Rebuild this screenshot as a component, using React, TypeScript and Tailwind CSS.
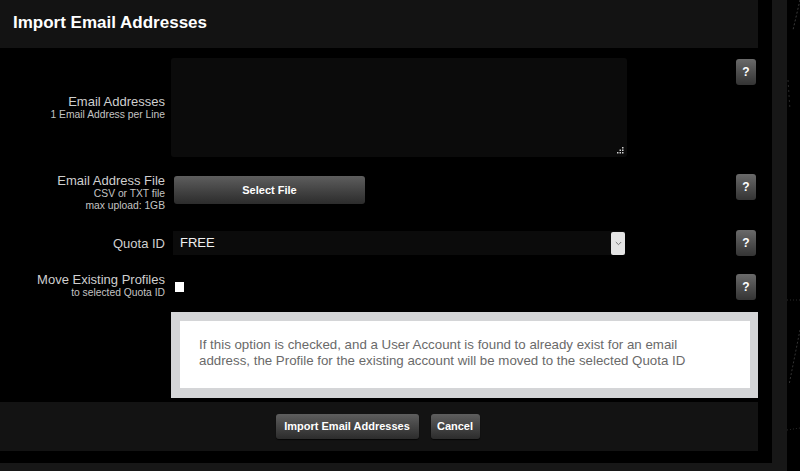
import React from "react";

const font = { fontFamily: '"Liberation Sans", Arial, sans-serif' };

function Help({ className = "" }: { className?: string }) {
  return (
    <div
      className={`w-[20px] h-[26px] rounded-[3px] bg-gradient-to-b from-[#6a6a6a] to-[#343434] flex items-center justify-center text-white font-bold text-[12px] leading-none shadow-[0_1px_1px_rgba(0,0,0,0.6)] ${className}`}
    >
      ?
    </div>
  );
}

function Btn({ children, className = "" }: { children: React.ReactNode; className?: string }) {
  return (
    <div
      className={`h-[25px] rounded-[3px] bg-gradient-to-b from-[#5e5e5e] to-[#2c2c2c] flex items-center justify-center text-white font-bold text-[11px] px-[7px] shadow-[0_1px_1px_rgba(0,0,0,0.7)] ${className}`}
    >
      {children}
    </div>
  );
}

export default function App() {
  return (
    <div className="w-[800px] h-[471px] bg-black flex overflow-hidden" style={font}>
      <div className="w-[787px] h-[471px] bg-[#171717] pr-[15px] pb-[8px] shrink-0">
        <div className="w-[772px] h-[463px] bg-black pr-[14px] pb-[12px]">
          <div className="w-[758px] h-[451px] bg-black flex flex-col">
            {/* header */}
            <div className="h-[48px] bg-[#131313] flex items-center pl-[13px] pb-[2px]">
              <span className="text-white font-bold text-[17px]">Import Email Addresses</span>
            </div>
            {/* body */}
            <div className="flex-1 flex flex-col">
              {/* row 1 */}
              <div className="mt-[10px] h-[99px] flex items-center">
                <div className="w-[165px] text-right">
                  <div className="text-[13px] leading-[15px] text-[#cfcfcf]">Email Addresses</div>
                  <div className="text-[10.3px] leading-[12px] text-[#c4c4c4]">1 Email Address per Line</div>
                </div>
                <div className="ml-[6px] w-[456px] h-[99px] bg-[#0b0b0b] rounded-[3px] relative">
                  <svg className="absolute right-[3px] bottom-[3px]" width="7" height="7" viewBox="0 0 7 7">
                    <rect x="5" y="0" width="1.5" height="1.5" fill="#cfcfcf" />
                    <rect x="2.5" y="2.5" width="1.5" height="1.5" fill="#cfcfcf" />
                    <rect x="5" y="2.5" width="1.5" height="1.5" fill="#cfcfcf" />
                    <rect x="0" y="5" width="1.5" height="1.5" fill="#cfcfcf" />
                    <rect x="2.5" y="5" width="1.5" height="1.5" fill="#cfcfcf" />
                    <rect x="5" y="5" width="1.5" height="1.5" fill="#cfcfcf" />
                  </svg>
                </div>
                <Help className="ml-auto mr-[2px] self-start mt-[1px]" />
              </div>
              {/* row 2 */}
              <div className="mt-[17px] flex items-start">
                <div className="w-[165px] text-right -mt-[1px]">
                  <div className="text-[13px] leading-[15px] text-[#cfcfcf]">Email Address File</div>
                  <div className="text-[10.3px] leading-[12px] text-[#c4c4c4]">CSV or TXT file</div>
                  <div className="text-[10.3px] leading-[12px] text-[#c4c4c4]">max upload: 1GB</div>
                </div>
                <Btn className="ml-[9px] mt-[2px] w-[191px] h-[28px]">Select File</Btn>
                <Help className="ml-auto mr-[2px]" />
              </div>
              {/* row 3 */}
              <div className="mt-[18px] h-[26px] flex items-center">
                <div className="w-[165px] text-right text-[13px] leading-[15px] text-[#cfcfcf]">Quota ID</div>
                <div className="ml-[8px] w-[452px] h-[24px] bg-[#0b0b0b] flex items-center">
                  <span className="pl-[7px] text-[13px] text-[#f0f0f0] flex-1">FREE</span>
                  <div className="w-[14px] h-[23px] bg-[#e4e4e4] rounded-[2px] flex items-center justify-center">
                    <svg width="7" height="5" viewBox="0 0 7 5">
                      <path d="M0.8 1 L3.5 3.7 L6.2 1" stroke="#777" strokeWidth="1" fill="none" />
                    </svg>
                  </div>
                </div>
                <Help className="ml-auto mr-[2px]" />
              </div>
              {/* row 4 */}
              <div className="mt-[18px] h-[25px] flex items-center">
                <div className="w-[165px] text-right -mt-[2px]">
                  <div className="text-[13px] leading-[15px] text-[#cfcfcf]">Move Existing Profiles</div>
                  <div className="text-[10.3px] leading-[12px] text-[#c4c4c4]">to selected Quota ID</div>
                </div>
                <div className="ml-[10px] w-[9px] h-[10px] bg-white" />
                <Help className="ml-auto mr-[2px]" />
              </div>
              {/* info box */}
              <div className="mt-[13px] ml-[171px] w-[587px] h-[86px] bg-[#d4d5d7] p-[9px] pr-[8px] pb-[10px]">
                <div className="h-full bg-white pl-[19px] pt-[16px] text-[13.3px] leading-[16px] text-[#6a6a6a] whitespace-nowrap">
                  If this option is checked, and a User Account is found to already exist for an email
                  <br />
                  address, the Profile for the existing account will be moved to the selected Quota ID
                </div>
              </div>
            </div>
            {/* footer */}
            <div className="h-[49px] bg-[#131313] flex items-center justify-center gap-[12px] pl-[1px] pb-[1px] pr-[4px]">
              <Btn className="w-[143px]">Import Email Addresses</Btn>
              <Btn className="w-[49px]">Cancel</Btn>
            </div>
          </div>
        </div>
      </div>
      <div className="flex-1 h-[471px]">
        <svg width="13" height="471" viewBox="0 0 13 471">
          <path d="M13 0 L6 30" stroke="#3a3a3a" strokeWidth="1" strokeDasharray="2 2" fill="none" />
          <path d="M1 80 L3 110" stroke="#2a2a2a" strokeWidth="1" strokeDasharray="2 3" fill="none" />
          <path d="M13 330 L2 385" stroke="#333" strokeWidth="1" strokeDasharray="2 2" fill="none" />
          <path d="M0 300 L13 300" stroke="#2a2a2a" strokeWidth="1" strokeDasharray="1 2" fill="none" />
          <path d="M0 430 L13 428" stroke="#2a2a2a" strokeWidth="1" strokeDasharray="1 2" fill="none" />
        </svg>
      </div>
    </div>
  );
}
